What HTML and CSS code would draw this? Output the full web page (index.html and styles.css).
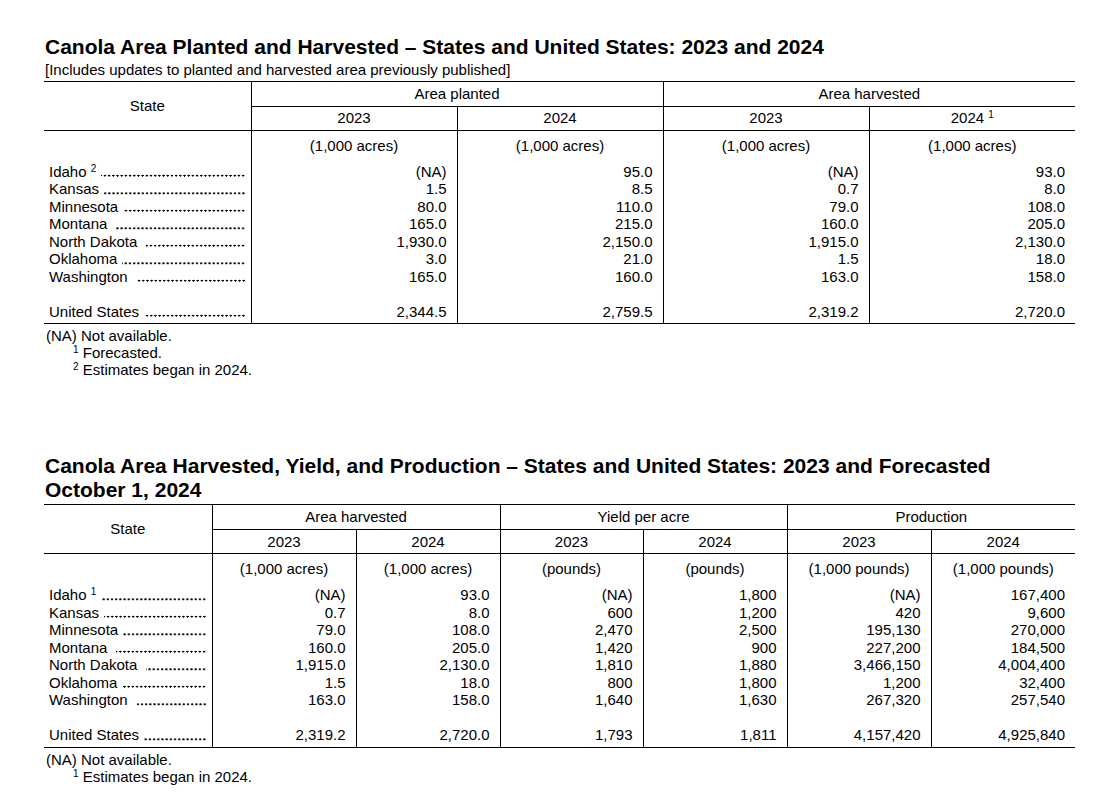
FILE: index.html
```html
<!DOCTYPE html>
<html lang="en">
<head>
<meta charset="utf-8">
<title>Canola Area Planted and Harvested</title>
<link rel="stylesheet" href="styles.css">
</head>
<body>
<div class="page">
  <section class="report">
    <h1 class="title">Canola Area Planted and Harvested – States and United States: 2023 and 2024</h1>
    <p class="subtitle">[Includes updates to planted and harvested area previously published]</p>
    <table class="stats t1">
      <colgroup>
        <col class="c-state1"><col class="c-w1"><col class="c-w1"><col class="c-w1"><col class="c-w1">
      </colgroup>
      <thead>
        <tr class="grp">
          <th rowspan="2" class="state-h">State</th>
          <th colspan="2">Area planted</th>
          <th colspan="2">Area harvested</th>
        </tr>
        <tr class="yr">
          <th>2023</th><th>2024</th><th>2023</th><th>2024 <sup>1</sup></th>
        </tr>
      </thead>
      <tbody>
        <tr class="units"><td></td><td>(1,000 acres)</td><td>(1,000 acres)</td><td>(1,000 acres)</td><td>(1,000 acres)</td></tr>
        <tr class="data"><td><div class="st"><span class="nm">Idaho <sup>2</sup></span><span class="dots"></span></div></td><td>(NA)</td><td>95.0</td><td>(NA)</td><td>93.0</td></tr>
        <tr class="data"><td><div class="st"><span class="nm">Kansas</span><span class="dots"></span></div></td><td>1.5</td><td>8.5</td><td>0.7</td><td>8.0</td></tr>
        <tr class="data"><td><div class="st"><span class="nm">Minnesota</span><span class="dots"></span></div></td><td>80.0</td><td>110.0</td><td>79.0</td><td>108.0</td></tr>
        <tr class="data"><td><div class="st"><span class="nm">Montana</span><span class="dots wide"></span></div></td><td>165.0</td><td>215.0</td><td>160.0</td><td>205.0</td></tr>
        <tr class="data"><td><div class="st"><span class="nm">North Dakota</span><span class="dots wide"></span></div></td><td>1,930.0</td><td>2,150.0</td><td>1,915.0</td><td>2,130.0</td></tr>
        <tr class="data"><td><div class="st"><span class="nm">Oklahoma</span><span class="dots"></span></div></td><td>3.0</td><td>21.0</td><td>1.5</td><td>18.0</td></tr>
        <tr class="data"><td><div class="st"><span class="nm">Washington</span><span class="dots wide"></span></div></td><td>165.0</td><td>160.0</td><td>163.0</td><td>158.0</td></tr>
        <tr class="data gap"><td></td><td></td><td></td><td></td><td></td></tr>
        <tr class="data total"><td><div class="st"><span class="nm">United States</span><span class="dots"></span></div></td><td>2,344.5</td><td>2,759.5</td><td>2,319.2</td><td>2,720.0</td></tr>
      </tbody>
    </table>
    <div class="notes">
      <p>(NA) Not available.</p>
      <p class="ind"><sup>1</sup> Forecasted.</p>
      <p class="ind"><sup>2</sup> Estimates began in 2024.</p>
    </div>
  </section>

  <section class="report second">
    <h1 class="title">Canola Area Harvested, Yield, and Production – States and United States: 2023 and Forecasted October 1, 2024</h1>
    <table class="stats t2">
      <colgroup>
        <col class="c-state2"><col class="c-w2"><col class="c-w2"><col class="c-w2n"><col class="c-w2"><col class="c-w2"><col class="c-w2">
      </colgroup>
      <thead>
        <tr class="grp">
          <th rowspan="2" class="state-h">State</th>
          <th colspan="2">Area harvested</th>
          <th colspan="2">Yield per acre</th>
          <th colspan="2">Production</th>
        </tr>
        <tr class="yr">
          <th>2023</th><th>2024</th><th>2023</th><th>2024</th><th>2023</th><th>2024</th>
        </tr>
      </thead>
      <tbody>
        <tr class="units"><td></td><td>(1,000 acres)</td><td>(1,000 acres)</td><td>(pounds)</td><td>(pounds)</td><td>(1,000 pounds)</td><td>(1,000 pounds)</td></tr>
        <tr class="data"><td><div class="st"><span class="nm">Idaho <sup>1</sup></span><span class="dots"></span></div></td><td>(NA)</td><td>93.0</td><td>(NA)</td><td>1,800</td><td>(NA)</td><td>167,400</td></tr>
        <tr class="data"><td><div class="st"><span class="nm">Kansas</span><span class="dots"></span></div></td><td>0.7</td><td>8.0</td><td>600</td><td>1,200</td><td>420</td><td>9,600</td></tr>
        <tr class="data"><td><div class="st"><span class="nm">Minnesota</span><span class="dots"></span></div></td><td>79.0</td><td>108.0</td><td>2,470</td><td>2,500</td><td>195,130</td><td>270,000</td></tr>
        <tr class="data"><td><div class="st"><span class="nm">Montana</span><span class="dots wide"></span></div></td><td>160.0</td><td>205.0</td><td>1,420</td><td>900</td><td>227,200</td><td>184,500</td></tr>
        <tr class="data"><td><div class="st"><span class="nm">North Dakota</span><span class="dots wide"></span></div></td><td>1,915.0</td><td>2,130.0</td><td>1,810</td><td>1,880</td><td>3,466,150</td><td>4,004,400</td></tr>
        <tr class="data"><td><div class="st"><span class="nm">Oklahoma</span><span class="dots"></span></div></td><td>1.5</td><td>18.0</td><td>800</td><td>1,800</td><td>1,200</td><td>32,400</td></tr>
        <tr class="data"><td><div class="st"><span class="nm">Washington</span><span class="dots wide"></span></div></td><td>163.0</td><td>158.0</td><td>1,640</td><td>1,630</td><td>267,320</td><td>257,540</td></tr>
        <tr class="data gap"><td></td><td></td><td></td><td></td><td></td><td></td><td></td></tr>
        <tr class="data total"><td><div class="st"><span class="nm">United States</span><span class="dots"></span></div></td><td>2,319.2</td><td>2,720.0</td><td>1,793</td><td>1,811</td><td>4,157,420</td><td>4,925,840</td></tr>
      </tbody>
    </table>
    <div class="notes">
      <p>(NA) Not available.</p>
      <p class="ind"><sup>1</sup> Estimates began in 2024.</p>
    </div>
  </section>
</div>
</body>
</html>
```

FILE: styles.css
```css
* {
  box-sizing: border-box;
}

html, body {
  margin: 0;
  padding: 0;
  background: #ffffff;
}

body {
  color: #000000;
  font-family: "Liberation Sans", Arial, sans-serif;
  font-size: 15px;
  line-height: 17.5px;
}

.page {
  padding: 35px 0 0 44px;
  width: 1105px;
}

.report {
  width: 1031px;
}

.report.second {
  margin-top: 76px;
}

.title {
  margin: 0;
  padding-left: 1px;
  font-size: 21px;
  font-weight: bold;
  line-height: 24px;
}

.subtitle {
  margin: 2px 0 2px;
  padding-left: 1px;
}

.second .title {
  margin-bottom: 2px;
}

.stats {
  width: 1031px;
  table-layout: fixed;
  border-collapse: collapse;
  border-top: 1px solid #000;
  border-bottom: 1px solid #000;
}

.c-state1 { width: 207px; }
.c-w1 { width: 206px; }
.c-state2 { width: 168px; }
.c-w2 { width: 144px; }
.c-w2n { width: 143px; }

.stats th {
  font-weight: normal;
  padding: 0;
  text-align: center;
  vertical-align: middle;
  border-left: 1px solid #000;
  border-bottom: 1px solid #000;
}

.stats tr.grp th {
  height: 25px;
}

.stats tr.yr th {
  height: 24px;
}

.stats th.state-h {
  border-left: none;
}

.stats td {
  padding: 0 10px 0 0;
  text-align: right;
  white-space: nowrap;
  border-left: 1px solid #000;
}

.stats td:first-child {
  border-left: none;
  padding: 0 5px 0 5px;
  text-align: left;
}

.stats tr.units td {
  height: 32.5px;
  padding: 6px 0 0 0;
  text-align: center;
  vertical-align: top;
}

.stats tr.data td {
  height: 17.5px;
  line-height: 17.5px;
  vertical-align: top;
}

.stats tr.total td {
  height: 21px;
}

.st {
  display: flex;
  align-items: stretch;
}

.nm {
  flex: none;
  white-space: nowrap;
}

.dots {
  flex: 1 1 auto;
  min-width: 0;
  height: 17.5px;
  margin-left: 5px;
  background-image: radial-gradient(circle at 50% 13px, #000 0 0.85px, rgba(0, 0, 0, 0) 1.25px);
  background-size: 4.2px 17.5px;
  background-repeat: repeat-x;
  background-position: right top;
}

.dots.wide {
  margin-left: 9px;
}

sup {
  font-size: 10px;
  line-height: 0;
  vertical-align: 5px;
}

.notes {
  margin-top: 3px;
}

.notes p {
  margin: 0;
  padding-left: 2px;
  line-height: 17px;
}

.notes p.ind {
  padding-left: 29px;
}
```
